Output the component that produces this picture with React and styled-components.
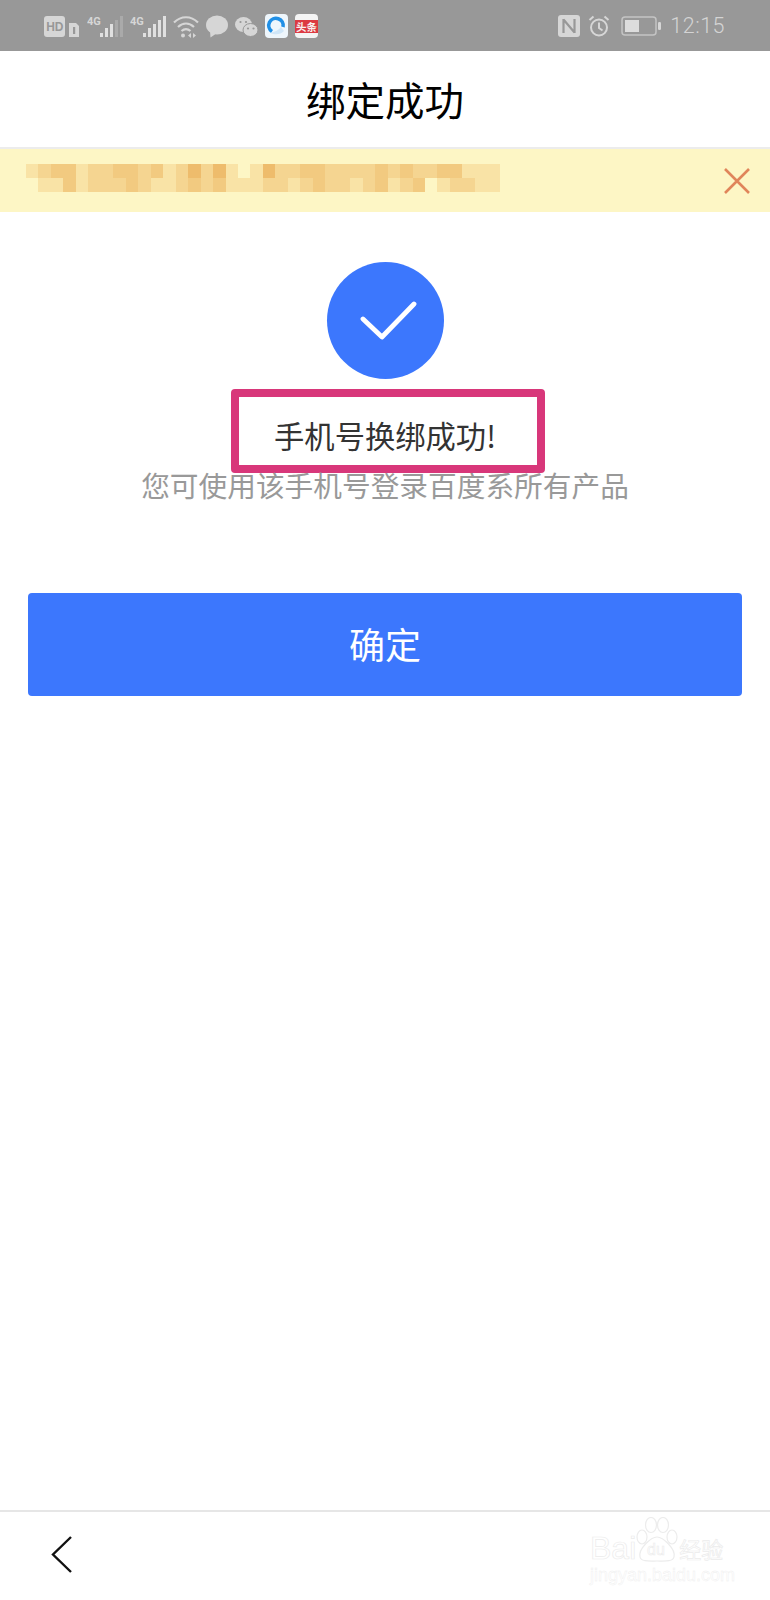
import styled, { createGlobalStyle } from 'styled-components';

const cjk = `'Noto Sans CJK SC', 'Noto Sans', sans-serif`;

const Global = createGlobalStyle`
  html, body {
    margin: 0;
    padding: 0;
    background: #fff;
  }
`;

const Page = styled.div`
  position: relative;
  width: 770px;
  height: 1600px;
  display: flex;
  flex-direction: column;
  background: #fff;
  font-family: ${cjk};
  overflow: hidden;
`;

const StatusBar = styled.div`
  height: 51px;
  flex: none;
  background: #989898;
  display: flex;
  align-items: center;
  justify-content: space-between;
  padding: 0 45px 0 44px;
`;

const StatusGroup = styled.div`
  display: flex;
  align-items: center;
  gap: ${({ gap }) => gap}px;
`;

const Time = styled.span`
  font-family: 'Roboto', sans-serif;
  font-size: 21.5px;
  font-weight: 300;
  letter-spacing: 0.5px;
  color: #d4d4d4;
`;

const TitleBar = styled.div`
  height: 98px;
  flex: none;
  display: flex;
  align-items: center;
  justify-content: center;
  padding-bottom: 2px;
  font-size: 39.5px;
  color: #000;
  border-bottom: 2px solid #ececec;
  box-sizing: border-box;
`;

const Banner = styled.div`
  height: 63px;
  flex: none;
  background: #fdf6c5;
  display: flex;
  align-items: center;
  justify-content: space-between;
  padding: 0 20px 0 26px;
`;

const Mosaic = styled.div`
  display: grid;
  grid-template-columns: repeat(38, 12.47px);
  grid-auto-rows: 14px;
  margin-bottom: 5px;
`;

const Tile = styled.i`
  display: block;
  background: ${({ tone }) => tone};
`;

const Content = styled.div`
  flex: 1;
  display: flex;
  flex-direction: column;
  align-items: center;
  padding: 50px 28px 0;
`;

const Badge = styled.div`
  width: 117px;
  height: 117px;
  border-radius: 50%;
  background: #3c77fd;
  display: flex;
  align-items: center;
  justify-content: center;
`;

const CheckIcon = styled.svg`
  margin-left: 7px;
`;

const Highlight = styled.div`
  box-sizing: border-box;
  width: 314px;
  height: 84px;
  margin: 10px 0 0 6px;
  border: 8px solid #d8377a;
  border-radius: 4px;
  display: flex;
  align-items: center;
  justify-content: center;
  padding: 8px 6px 0 0;
  font-size: 30.3px;
  color: #333;
`;

const Hint = styled.div`
  margin-top: -8px;
  font-size: 28.7px;
  line-height: 40px;
  color: #999;
  white-space: nowrap;
`;

const Confirm = styled.button`
  width: 100%;
  height: 103px;
  margin-top: 88px;
  border: 0 none;
  border-radius: 4px;
  background: #3c77fd;
  color: #fff;
  font-family: ${cjk};
  font-size: 36px;
  padding: 0 0 3px;
`;

const BottomBar = styled.div`
  height: 90px;
  flex: none;
  box-sizing: border-box;
  border-top: 2px solid #e6e6e6;
  padding: 23px 0 0 50px;
  display: flex;
  align-items: flex-start;
`;

const Watermark = styled.div`
  position: absolute;
  left: 590px;
  top: 1532px;
  width: 140px;
  color: #fff;
  -webkit-text-stroke: 0.7px #ececec;
`;

const Paw = styled.svg`
  position: absolute;
  left: 46px;
  top: -15px;
`;

const WatermarkRow = styled.div`
  display: flex;
  align-items: center;
  font-family: 'Liberation Sans', sans-serif;
  font-size: 32px;
  line-height: 32px;
  height: 32px;
`;

const WatermarkCjk = styled.span`
  margin-left: 43px;
  font-family: ${cjk};
  font-size: 22px;
`;

const WatermarkUrl = styled.div`
  font-family: 'Liberation Sans', sans-serif;
  font-size: 18px;
  line-height: 22px;
  white-space: nowrap;
  -webkit-text-stroke: 0.4px #eeeeee;
`;

const tones = {
  w: '#fdf6c5',
  l: '#f9e3a6',
  m: '#f5d591',
  d: '#f2ca80',
  b: '#eebc6c',
};

const row1 = 'lmddlmmddmdlmbmblwlbmmddmmmmdmdmmddlll';
const row2 = 'wlldlmmmdmllmdmdlllmmlmdmmlmdlmdwlmmll';
const mosaicTones = (row1 + row2).split('').map((t) => tones[t]);

const Bars = ({ full }) => (
  <svg width="36" height="24" viewBox="0 0 36 24">
    <text x="0" y="10.5" fontFamily="Roboto, sans-serif" fontSize="11" fontWeight="700" fill="#d6d6d6">4G</text>
    {[4, 9, 13, 17, 21].map((h, i) => (
      <rect
        key={i}
        x={13 + i * 5}
        y={23 - h}
        width="3"
        height={h}
        fill={i < full ? '#e0e0e0' : '#aaaaaa'}
      />
    ))}
  </svg>
);

export default function App() {
  return (
    <Page>
      <Global />
      <StatusBar>
        <StatusGroup gap={7}>
          <svg width="36" height="24" viewBox="0 0 36 24">
            <rect x="0" y="2" width="21" height="21" rx="3" fill="#d6d6d6" />
            <text x="2.2" y="17" fontFamily="'Liberation Sans', sans-serif" fontWeight="700" fontSize="12" fill="#989898">HD</text>
            <path d="M25 9h7l3 3v11H25z" fill="#d6d6d6" />
            <rect x="29" y="13" width="2.2" height="7" fill="#989898" />
          </svg>
          <Bars full={3} />
          <Bars full={5} />
          <svg width="26" height="24" viewBox="0 0 26 24" fill="none" stroke="#d6d6d6" strokeWidth="2.2">
            <path d="M1 8.5c7-7 17-7 24 0" />
            <path d="M5 13c5-4.5 11-4.5 16 0" />
            <path d="M8.5 17c3-2.6 6-2.6 9 0" />
            <circle cx="10" cy="21.5" r="2" fill="#d6d6d6" stroke="none" />
            <path d="M15 21.5l3-2.5v5zM20 19l3 2.5-3 2.5z" fill="#d6d6d6" stroke="none" />
          </svg>
          <svg width="22" height="24" viewBox="0 0 22 24">
            <ellipse cx="11" cy="11" rx="11" ry="9.5" fill="#d6d6d6" />
            <path d="M4 16l.5 7.5L11 19z" fill="#d6d6d6" />
          </svg>
          <svg width="23" height="24" viewBox="0 0 23 24">
            <ellipse cx="8.5" cy="10.5" rx="8.5" ry="7.5" fill="#d6d6d6" />
            <ellipse cx="15.5" cy="16" rx="7.5" ry="6.5" fill="#d6d6d6" stroke="#989898" />
            <circle cx="5.5" cy="8" r="1.1" fill="#989898" />
            <circle cx="11" cy="8" r="1.1" fill="#989898" />
            <circle cx="13" cy="14.5" r="1.1" fill="#989898" />
            <circle cx="18.5" cy="14.5" r="1.1" fill="#989898" />
          </svg>
          <svg width="23" height="24" viewBox="0 0 23 24">
            <rect width="23" height="24" rx="4" fill="#eef6fc" />
            <path d="M7 17.5A7.2 7.2 0 1 1 18 13" fill="none" stroke="#1f8fe6" strokeWidth="3.6" />
            <path d="M5 19c6 2 10 2 14-2l-3-4c-2 3-6 5-11 6z" fill="#cfe6f8" />
          </svg>
          <svg width="23" height="24" viewBox="0 0 23 24">
            <rect width="23" height="24" rx="4" fill="#f4f4f4" />
            <rect y="6" width="23" height="13" fill="#dc3a42" />
            <text x="1" y="16.6" fontFamily="'Noto Sans CJK SC', sans-serif" fontSize="10.5" fontWeight="700" fill="#f8f0f0">头条</text>
          </svg>
        </StatusGroup>
        <StatusGroup gap={8}>
          <svg width="22" height="24" viewBox="0 0 22 24">
            <path d="M0 4a3 3 0 0 1 3-3h5l6 8V23H3a3 3 0 0 1-3-3z" fill="#d6d6d6" />
            <path d="M8 1h11a3 3 0 0 1 3 3v16a3 3 0 0 1-3 3h-5l-6-8z" fill="#d6d6d6" />
            <path d="M5.5 5v14M16.5 5v14M5.5 5.5L16.5 18.5" fill="none" stroke="#989898" strokeWidth="2.2" />
          </svg>
          <svg width="22" height="24" viewBox="0 0 22 24" fill="none" stroke="#d6d6d6" strokeWidth="2">
            <circle cx="11" cy="13.5" r="8" />
            <path d="M11 8.5v5.5l3.5 2.5M1.5 6l4-3.5M20.5 6l-4-3.5" />
          </svg>
          <svg width="44" height="22" viewBox="-3 0 44 22">
            <rect x="1" y="2" width="34" height="18" rx="3" fill="none" stroke="#c4c4c4" strokeWidth="1.5" />
            <rect x="4" y="5" width="14" height="12" fill="#dcdcdc" />
            <rect x="37" y="7" width="3" height="8" rx="1.2" fill="#d6d6d6" />
          </svg>
          <Time>12:15</Time>
        </StatusGroup>
      </StatusBar>

      <TitleBar>绑定成功</TitleBar>

      <Banner>
        <Mosaic>
          {mosaicTones.map((tone, i) => (
            <Tile key={i} tone={tone} />
          ))}
        </Mosaic>
        <svg width="26" height="26" viewBox="0 0 26 26" fill="none" stroke="#e0855a" strokeWidth="2.6">
          <path d="M1 1l24 24M25 1L1 25" />
        </svg>
      </Banner>

      <Content>
        <Badge>
          <CheckIcon width="57" height="39" viewBox="0 0 57 39" fill="none" stroke="#fff" strokeWidth="4.8" strokeLinecap="round" strokeLinejoin="round">
            <path d="M3 18l19 18L54 3" />
          </CheckIcon>
        </Badge>
        <Highlight>手机号换绑成功!</Highlight>
        <Hint>您可使用该手机号登录百度系所有产品</Hint>
        <Confirm>确定</Confirm>
      </Content>

      <BottomBar>
        <svg width="24" height="40" viewBox="0 0 24 40" fill="none" stroke="#111" strokeWidth="2.4">
          <path d="M21 2L3 19.5 21 37" />
        </svg>
      </BottomBar>

      <Watermark>
        <Paw width="42" height="46" viewBox="0 0 42 46" fill="#fff" stroke="#ececec" strokeWidth="1.2">
          <ellipse cx="6" cy="20" rx="5" ry="7" />
          <ellipse cx="15" cy="8" rx="5.5" ry="7.5" />
          <ellipse cx="27" cy="8" rx="5.5" ry="7.5" />
          <ellipse cx="36" cy="20" rx="5" ry="7" />
          <path d="M21 20c6 0 19 12 17 20-1 5-10 4-17 4s-16 1-17-4c-2-8 11-20 17-20z" />
          <text x="11" y="38" fontFamily="'Liberation Sans', sans-serif" fontSize="16" strokeWidth="0.6">du</text>
        </Paw>
        <WatermarkRow>
          Bai
          <WatermarkCjk>经验</WatermarkCjk>
        </WatermarkRow>
        <WatermarkUrl>jingyan.baidu.com</WatermarkUrl>
      </Watermark>
    </Page>
  );
}
